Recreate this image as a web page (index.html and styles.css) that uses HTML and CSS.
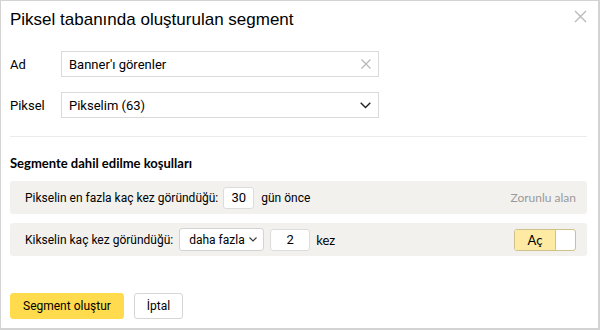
FILE: index.html
```html
<!DOCTYPE html>
<html lang="tr">
<head>
    <meta charset="UTF-8">
    <title>Segment</title>
    <link rel="stylesheet" href="styles.css">
</head>
<body>
    <div class="dialog">
        <div class="header">
            <h1>Piksel tabanında oluşturulan segment</h1>
            <button class="close" aria-label="Kapat">
                <svg width="13" height="13" viewBox="0 0 13 13"><path d="M1 1L12 12M12 1L1 12" stroke="#b8b8b8" stroke-width="1.3" fill="none"/></svg>
            </button>
        </div>

        <div class="field">
            <label for="name">Ad</label>
            <div class="box">
                <input type="text" id="name" value="Banner'ı görenler">
                <svg width="10" height="10" viewBox="0 0 10 10"><path d="M0.5 0.5L9.5 9.5M9.5 0.5L0.5 9.5" stroke="#b5b5b5" stroke-width="1.1" fill="none"/></svg>
            </div>
        </div>
        <div class="field">
            <label>Piksel</label>
            <div class="box">
                <span class="value">Pikselim (63)</span>
                <svg width="11" height="7" viewBox="0 0 11 7"><path d="M0.7 0.8L5.5 5.6L10.3 0.8" stroke="#222" stroke-width="1.4" fill="none"/></svg>
            </div>
        </div>

        <div class="sep"></div>

        <h2>Segmente dahil edilme koşulları</h2>

        <div class="cond">
            <span>Pikselin en fazla kaç kez göründüğü:</span>
            <span class="num">30</span>
            <span>gün önce</span>
            <span class="hint">Zorunlu alan</span>
        </div>
        <div class="cond">
            <span>Kikselin kaç kez göründüğü:</span>
            <span class="small-select">daha fazla
                <svg width="8" height="5" viewBox="0 0 8 5"><path d="M0.5 0.5L4 4L7.5 0.5" stroke="#333" stroke-width="1.1" fill="none"/></svg>
            </span>
            <span class="num wide">2</span>
            <span class="alt">kez</span>
            <span class="toggle"><span class="on">Aç</span><span class="knob"></span></span>
        </div>

        <div class="footer">
            <button class="btn primary">Segment oluştur</button>
            <button class="btn">İptal</button>
        </div>
    </div>
</body>
</html>
```

FILE: styles.css
```css
body {
    margin: 0;
    font-family: Roboto, "Liberation Sans", sans-serif;
    font-size: 13px;
    color: #000;
    background: #fff;
}
.dialog {
    width: 600px;
    height: 330px;
    box-sizing: border-box;
    border: 1px solid #d3d3d3;
    border-right-width: 2px;
    border-bottom-width: 2px;
    padding: 0 11px 0 9px;
}
.header {
    display: flex;
    justify-content: space-between;
    align-items: flex-start;
    height: 40px;
}
.header h1 {
    margin: 7px 0 0 0;
    font-family: "Liberation Sans", Arial, sans-serif;
    font-size: 17px;
    font-weight: normal;
    line-height: 24px;
}
.close {
    border: none;
    background: none;
    padding: 0;
    margin: 9px 0 0 0;
    line-height: 0;
}
.field {
    display: flex;
    align-items: center;
    margin-top: 10px;
}
.field + .field {
    margin-top: 15px;
}
.field label {
    width: 51px;
}
.box {
    width: 318px;
    height: 26px;
    box-sizing: border-box;
    border: 1px solid #d9d9d9;
    display: flex;
    align-items: center;
    justify-content: space-between;
    padding: 0 7px 0 7px;
}
.box input {
    border: none;
    outline: none;
    padding: 0;
    font: inherit;
    width: 260px;
}
.sep {
    height: 1px;
    background: #ebebeb;
    margin-top: 18px;
}
h2 {
    margin: 17px 0 0 0;
    font-size: 13px;
    line-height: 18px;
    font-family: Lato, sans-serif;
    font-weight: bold;
}
.cond {
    display: flex;
    align-items: center;
    gap: 6px;
    height: 33px;
    background: #f2f1ee;
    border-radius: 3px;
    padding: 0 11px 0 15px;
    margin-top: 9px;
    font-size: 12px;
}
.num {
    width: 31px;
    height: 22px;
    box-sizing: border-box;
    background: #fff;
    border: 1px solid #dcdcdc;
    border-radius: 3px;
    display: flex;
    align-items: center;
    justify-content: center;
    margin: 0 1px 0 -1px;
    font-size: 13px;
}
.num.wide {
    width: 40px;
    margin: 0;
}
.small-select {
    width: 85px;
    height: 23px;
    box-sizing: border-box;
    background: #fff;
    border: 1px solid #d3d3d3;
    border-radius: 3px;
    display: flex;
    align-items: center;
    gap: 4px;
    padding-left: 9px;
}
.hint {
    margin-left: auto;
    color: #9a9a9a;
    font-family: Lato, sans-serif;
    font-size: 12px;
}
.alt {
    font-family: Lato, sans-serif;
    font-size: 13px;
}
.toggle {
    margin-left: auto;
    display: flex;
    width: 62px;
    height: 22px;
    box-sizing: border-box;
    border: 1px solid #cfc18a;
    border-radius: 3px;
    overflow: hidden;
    background: #fff;
}
.toggle .on {
    width: 40px;
    background: #feeaa3;
    display: flex;
    align-items: center;
    justify-content: center;
    font-family: Lato, sans-serif;
    font-size: 13px;
}
.toggle .knob {
    flex: 1;
    border-left: 1px solid #cfc18a;
}
.footer {
    display: flex;
    gap: 10px;
    margin-top: 37px;
}
.btn {
    height: 26px;
    padding: 0 12px;
    font: inherit;
    font-size: 12px;
    color: #000;
    background: #fff;
    border: 1px solid #d6d6d6;
    border-radius: 3px;
}
.btn.primary {
    background: #ffdb4d;
    border-color: #ffdb4d;
}
```
